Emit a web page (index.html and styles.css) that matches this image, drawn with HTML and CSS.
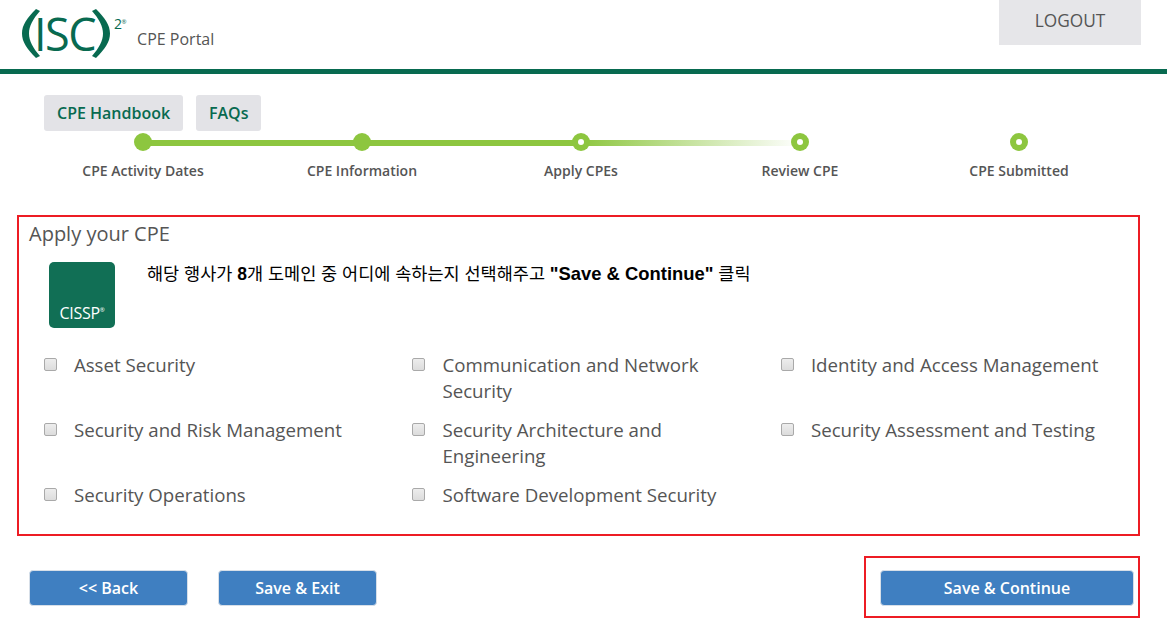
FILE: index.html
```html
<!DOCTYPE html>
<html lang="en">
<head>
<meta charset="utf-8">
<title>CPE Portal</title>
<link rel="stylesheet" href="styles.css">
</head>
<body>
<header class="topbar">
  <div class="brand">
    <div class="logo">
      <svg class="paren" viewBox="0 0 18 49" width="18" height="49"><path d="M14 0L18 2C11 10 7 17 7 24.500S11 39 18 47L14 49C5 40 0 33 0 24.500S5 9 14 0z" fill="#086a50"/></svg>
      <span class="logo-text">ISC</span>
      <svg class="paren" viewBox="0 0 18 49" width="18" height="49"><path transform="translate(18 0) scale(-1 1)" d="M14 0L18 2C11 10 7 17 7 24.500S11 39 18 47L14 49C5 40 0 33 0 24.500S5 9 14 0z" fill="#086a50"/></svg>
      <span class="logo-sup">2<small>®</small></span>
    </div>
    <span class="portal">CPE Portal</span>
  </div>
  <a class="logout">LOGOUT</a>
</header>

<nav class="links">
  <a class="link-btn">CPE Handbook</a>
  <a class="link-btn">FAQs</a>
</nav>

<ol class="stepper">
  <li class="step done"><span class="dot"></span><span class="step-label">CPE Activity Dates</span></li>
  <li class="step done"><span class="dot"></span><span class="step-label">CPE Information</span></li>
  <li class="step current"><span class="dot"></span><span class="step-label">Apply CPEs</span></li>
  <li class="step todo"><span class="dot"></span><span class="step-label">Review CPE</span></li>
  <li class="step last"><span class="dot"></span><span class="step-label">CPE Submitted</span></li>
</ol>

<section class="panel">
  <h2 class="panel-title">Apply your CPE</h2>
  <div class="intro">
    <div class="tile"><span class="tile-text">CISSP<sup>®</sup></span></div>
    <p class="note">해당 행사가 <b>8</b>개 도메인 중 어디에 속하는지 선택해주고 <b class="latin">"Save &amp; Continue"</b> 클릭</p>
  </div>
  <div class="domains">
    <label class="domain"><input type="checkbox"><span>Asset Security</span></label>
    <label class="domain"><input type="checkbox"><span>Communication and Network Security</span></label>
    <label class="domain"><input type="checkbox"><span>Identity and Access Management</span></label>
    <label class="domain"><input type="checkbox"><span>Security and Risk Management</span></label>
    <label class="domain"><input type="checkbox"><span>Security Architecture and Engineering</span></label>
    <label class="domain"><input type="checkbox"><span>Security Assessment and Testing</span></label>
    <label class="domain"><input type="checkbox"><span>Security Operations</span></label>
    <label class="domain"><input type="checkbox"><span>Software Development Security</span></label>
  </div>
</section>

<footer class="actions">
  <div class="actions-left">
    <button class="action">&lt;&lt; Back</button>
    <button class="action">Save &amp; Exit</button>
  </div>
  <div class="highlight">
    <button class="action wide">Save &amp; Continue</button>
  </div>
</footer>
</body>
</html>
```
FILE: styles.css
```css
* { box-sizing: border-box; }
html, body { margin: 0; padding: 0; }
body {
  width: 1167px;
  height: 624px;
  overflow: hidden;
  background: #fff;
  font-family: "Open Sans", "Noto Sans CJK KR", sans-serif;
  color: #4a4a4a;
}
.topbar {
  height: 74px;
  border-bottom: 5px solid #086a50;
  display: flex;
  justify-content: space-between;
  align-items: flex-start;
  padding: 0 26px 0 22px;
}
.brand { display: flex; align-items: flex-start; }
.logo { display: flex; align-items: flex-start; height: 58px; padding-top: 9px; color: #086a50; }
.logo-text {
  font-family: "Open Sans", sans-serif;
  font-weight: 400;
  font-size: 45px;
  line-height: 49px;
  letter-spacing: -1.500px;
  margin: 0 -3px 0 -6px;
}
.logo-sup { font-size: 14px; line-height: 14px; margin: 6px 0 0 4px; font-weight: 400; letter-spacing: -0.500px; }
.logo-sup small { font-size: 6px; vertical-align: 5px; }
.portal { font-size: 16px; line-height: 22px; margin: 28px 0 0 11px; color: #555; }
.logout {
  width: 142px;
  height: 45px;
  background: #e6e6e9;
  color: #555;
  font-size: 17.300px;
  line-height: 41px;
  text-align: center;
}
.links { display: flex; gap: 12.800px; padding: 21px 0 0 44px; height: 57px; }
.link-btn {
  height: 36px;
  padding: 0 13px;
  background: #e3e3e7;
  border-radius: 3px;
  color: #086a50;
  font-size: 16px;
  font-weight: 600;
  line-height: 36px;
}
.stepper {
  list-style: none;
  margin: 2px 0 0 33.500px;
  padding: 0;
  display: grid;
  grid-template-columns: repeat(5, 219px);
}
.step { position: relative; display: flex; flex-direction: column; align-items: center; }
.step::after {
  content: "";
  position: absolute;
  top: 7px;
  left: 50%;
  width: 219px;
  height: 6px;
  background: #8dc63f;
}
.step.current::after { background: linear-gradient(to right, #8dc63f, #fff); }
.step.todo::after, .step.last::after { display: none; }
.dot {
  position: relative;
  z-index: 1;
  width: 18px;
  height: 18px;
  border-radius: 50%;
  background: #8dc63f;
}
.current .dot::after, .todo .dot::after, .last .dot::after {
  content: "";
  position: absolute;
  top: 6px;
  left: 6px;
  width: 6px;
  height: 6px;
  border-radius: 50%;
  background: #fff;
}
.step-label { margin-top: 10px; font-size: 14px; line-height: 19px; font-weight: 600; color: #555; }
.panel {
  width: 1123px;
  height: 321px;
  margin: 35px 0 0 17px;
  border: 2px solid #ed1c24;
  padding: 3px 10px 0 10px;
}
.panel-title { margin: 0; font-size: 20px; line-height: 27px; font-weight: 400; color: #555; }
.intro { display: flex; gap: 32px; padding: 15px 0 0 20px; height: 105px; }
.tile {
  width: 66px;
  height: 66px;
  background: #116f55;
  border-radius: 5px;
  color: #fff;
  display: flex;
  align-items: flex-end;
  justify-content: center;
  padding-bottom: 6px;
}
.tile-text { font-size: 16px; line-height: 18px; letter-spacing: -0.300px; }
.tile-text sup { font-size: 6px; vertical-align: 7px; line-height: 0; }
.note {
  margin: 0;
  padding-top: 1px;
  font-family: "Liberation Sans", "Noto Sans CJK KR", sans-serif;
  font-size: 17.500px;
  line-height: 22px;
  color: #000;
}
.latin { font-size: 18.400px; }
.domains {
  display: grid;
  grid-template-columns: repeat(3, 368.500px);
  grid-auto-rows: 65px;
  margin-left: 14.900px;
}
.domain { display: flex; align-items: flex-start; font-size: 18.700px; line-height: 26px; color: #555; padding-right: 20px; }
.domain input {
  appearance: none;
  width: 13px;
  height: 13px;
  margin: 6px 17px 0 0;
  flex: none;
  border: 1px solid #a9a9a9;
  border-radius: 2px;
  background: linear-gradient(#ededed, #dcdcdc);
}
.actions { display: flex; justify-content: space-between; margin: 20px 27px 0 29px; }
.actions-left { display: flex; gap: 30px; padding-top: 14px; }
.action {
  width: 159px;
  height: 36px;
  background: #3f7fc1;
  border: 1px solid #d7dfe8;
  border-radius: 4px;
  color: #fff;
  font-family: "Open Sans", sans-serif;
  font-size: 16px;
  font-weight: 600;
  padding: 0;
}
.highlight { width: 276px; height: 62px; border: 2px solid #ed1c24; padding: 12px 0 0 14px; }
.action.wide { width: 254px; }
```
